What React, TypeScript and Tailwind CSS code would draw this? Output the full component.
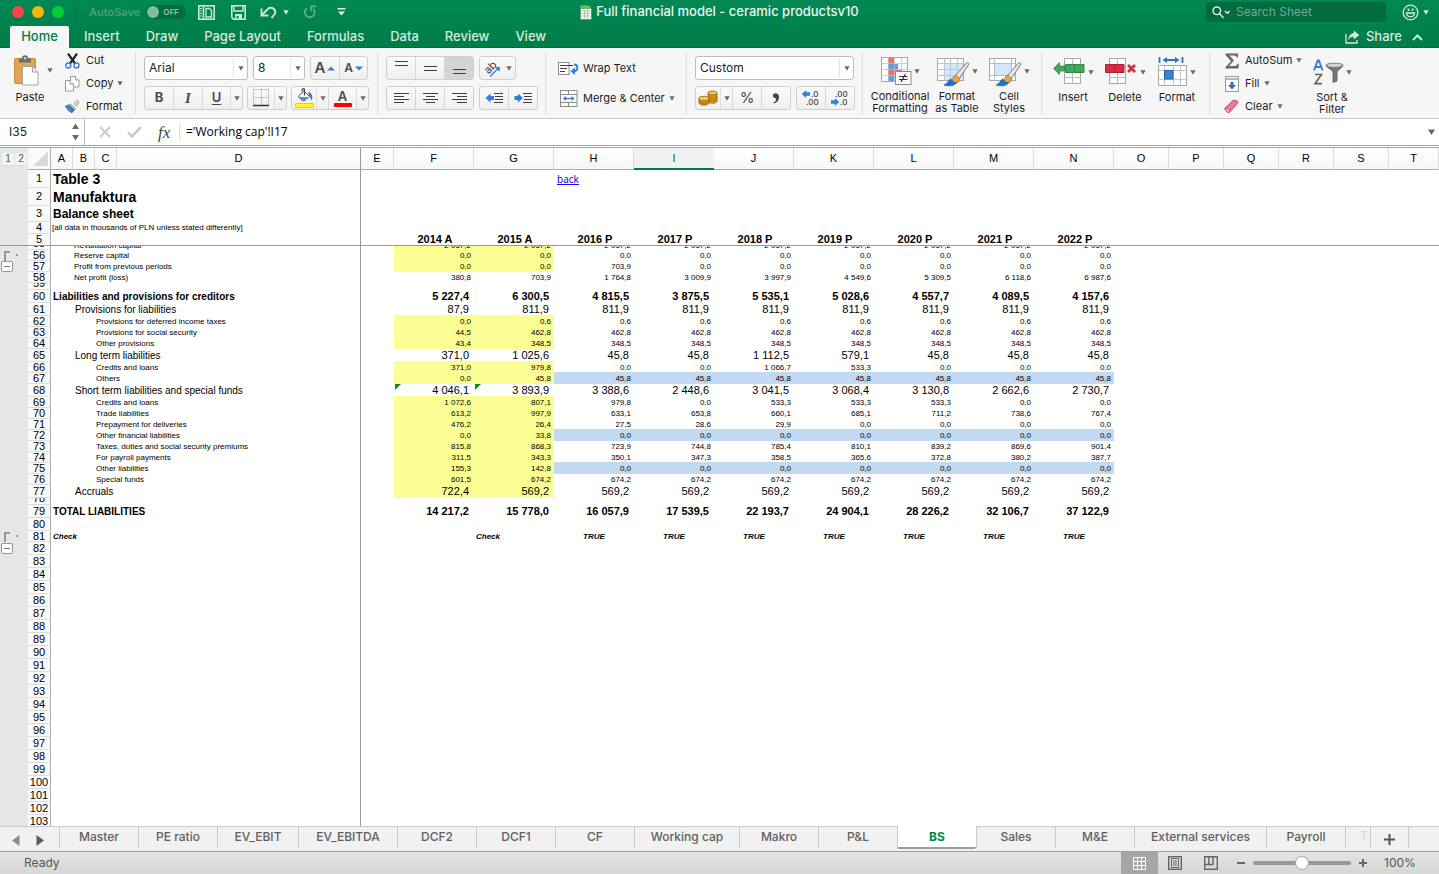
import React from 'react';
import type { ReactNode } from 'react';

/* ---------- small shared pieces ---------- */

const Caret = ({ className = 'text-[#6b6b6b]' }: { className?: string }) => (
  <svg width="6" height="5" viewBox="0 0 6 5" className={`shrink-0 ${className}`} aria-hidden="true">
    <path d="M0.300 0.300h5.400L3 4.800z" fill="currentColor" />
  </svg>
);

const DividedCaret = () => (
  <span className="flex h-full w-3 shrink-0 items-center justify-center border-l border-[#dedede]">
    <Caret />
  </span>
);

const Separator = () => <div className="w-px shrink-0 self-stretch bg-[#dedede]" />;

const segment =
  'flex h-full items-center justify-center border-l border-[#d6d6d6] first:border-l-0 text-[#4a4a4a]';
const cluster =
  'flex h-6 overflow-hidden rounded-[3px] border border-[#cfcfcf] bg-linear-to-b from-[#fafafa] to-[#efefef]';

/* ---------- title bar icons ---------- */

const PanelIcon = () => (
  <svg width="17" height="15" viewBox="0 0 17 15" fill="none" stroke="#cfe6da" strokeWidth="1.600">
    <rect x="0.800" y="0.800" width="15.400" height="13.400" />
    <path d="M5.500 1v13" />
    <path d="M2 3.500h2M2 6h2M2 8.500h2M2 11h2" strokeWidth="1" />
    <path d="M8 3.500h3.500l2 2v6.500h-5.500z" strokeWidth="1.300" />
  </svg>
);

const SaveIcon = () => (
  <svg width="15" height="15" viewBox="0 0 15 15" fill="none" stroke="#cfe6da" strokeWidth="1.600">
    <path d="M0.800 0.800h13.400v13.400H2.600L0.800 12.400z" />
    <path d="M3 1v5h9V1" strokeWidth="1.400" />
    <path d="M4 9h7v5H4z" fill="#cfe6da" stroke="none" />
    <path d="M5.500 11h2v2.500h-2z" fill="#00824c" stroke="none" />
  </svg>
);

const UndoIcon = () => (
  <svg width="17" height="14" viewBox="0 0 17 14" fill="none" stroke="#cfe6da" strokeWidth="1.900">
    <path d="M1.500 3.500v7h7" />
    <path d="M2 10L7.300 4.500c3-3.500 8.200-1 8 2.800-0.100 2-1.600 3.400-3.800 5.700" />
  </svg>
);

const RedoIcon = () => (
  <svg width="14" height="14" viewBox="0 0 14 14" fill="none" stroke="#5fae89" strokeWidth="1.800">
    <path d="M4 3A5 5 0 1 0 10.500 4" />
    <path d="M13 1.300H8.300v5" />
  </svg>
);

const WorkbookIcon = () => (
  <svg width="12" height="15" viewBox="0 0 12 15">
    <path d="M0.500 0.500h7.500l3.500 3.500v10.500h-11z" fill="#f4f7f2" stroke="#5c9c62" />
    <path d="M1 1h7l3 3H1z" fill="#62c15c" />
    <path d="M2 6h8M2 8.500h8M2 11h8M4.500 5v8.500M7.500 5v8.500" stroke="#a7b8a2" strokeWidth="0.800" />
  </svg>
);

/* ---------- ribbon icons ---------- */

const PasteIcon = () => (
  <svg width="25" height="31" viewBox="0 0 25 31">
    <rect x="0.500" y="3.500" width="21" height="25" rx="1.500" fill="#dfa553" stroke="#c98c3b" />
    <path d="M5 3.500h3a3 3.200 0 0 1 6 0h3v4H5z" fill="#6e6e6e" />
    <circle cx="11" cy="3.200" r="1.200" fill="#d9d9d9" />
    <path d="M8.500 11.500h10l5.500 5.500v13H8.500z" fill="#fff" stroke="#a3a3a3" />
    <path d="M18.500 11.500v5.500H24" fill="#eee" stroke="#a3a3a3" />
  </svg>
);

const CutIcon = () => (
  <svg width="15" height="16" viewBox="0 0 15 16" fill="none">
    <path d="M3 0.500l7 10M12 0.500l-7 10" stroke="#222" strokeWidth="2.200" />
    <circle cx="3.300" cy="12.500" r="2.500" stroke="#3a7fd0" strokeWidth="1.400" />
    <circle cx="11.500" cy="12.500" r="2.500" stroke="#3a7fd0" strokeWidth="1.400" />
  </svg>
);

const CopyIcon = () => (
  <svg width="15" height="16" viewBox="0 0 15 16" fill="#fff" stroke="#9a9a9a">
    <path d="M5.500 0.500h5l3.500 3.500v7h-8.500z" />
    <path d="M0.500 4.500h4.500l3.500 3.500v7h-8z" />
    <path d="M5 4.500v3.500h3.500M10.500 0.500v3.500h3.500" />
  </svg>
);

const PainterIcon = () => (
  <svg width="17" height="15" viewBox="0 0 17 15">
    <path d="M10 4l4-3.500 2 2L13 7z" fill="#d9d9d9" stroke="#8a8a8a" strokeWidth="0.800" />
    <path d="M6 4.500l6 5.500-1.500 1.500-6.500-5.500z" fill="#bdbdbd" stroke="#777" strokeWidth="0.800" />
    <path d="M4 6l6.500 5.500-2.500 3C5 13.500 2 11 0.500 7z" fill="#3f78b5" stroke="#2f5f94" strokeWidth="0.800" />
    <path d="M3 8.500l3.500 4" stroke="#8bb8e6" />
  </svg>
);

const BordersIcon = () => (
  <svg width="18" height="18" viewBox="0 0 18 18">
    <path d="M1.500 0.500v15M9.500 0.500v15M16.500 0.500v15M1.500 0.500h15M1.500 8.500h15" stroke="#999" strokeDasharray="1 1" fill="none" />
    <path d="M1 16.500h16" stroke="#333" strokeWidth="1.300" />
  </svg>
);

const FillIcon = () => (
  <svg width="19" height="20" viewBox="0 0 19 20">
    <path d="M3.500 8l5.500-5 5.500 5.500L9 13c-2 0-4.500-2.500-5.500-5z" fill="#fff" stroke="#555" />
    <path d="M4.500 9l9 0-4.700 3.600C7 12.500 5.500 11 4.500 9z" fill="#4a8fdc" />
    <path d="M9.500 7.500V1.200c-1.500-1.200-2.700 0-2.300 2.300" fill="none" stroke="#444" strokeWidth="1.200" />
    <path d="M13 4c4 0.500 5 4 4 8.500-1.700-1-1.500-3.500-3-5z" fill="#3a7fd0" />
    <rect x="0.500" y="15.500" width="18" height="4" rx="0.500" fill="#ff0" stroke="#d8d800" />
  </svg>
);

const alignLines: Record<string, string> = {
  top: 'M3 2.500h13M3 6.500h13',
  middle: 'M3 7.500h13M3 11.500h13',
  bottom: 'M3 10.500h13M3 14.500h13',
  left: 'M2 4.500h15M2 7.500h10M2 10.500h15M2 13.500h10',
  center: 'M2 4.500h15M5 7.500h9M2 10.500h15M5 13.500h9',
  right: 'M2 4.500h15M7 7.500h10M2 10.500h15M7 13.500h10',
};

const AlignIcon = ({ kind }: { kind: string }) => (
  <svg width="19" height="18" viewBox="0 0 19 18" stroke="#3f3f3f" fill="none">
    <path d={alignLines[kind]} />
  </svg>
);

const IndentIcon = ({ out = false }: { out?: boolean }) => (
  <svg width="19" height="18" viewBox="0 0 19 18">
    <path d="M9 4.500h9M10 7.500h8M10 10.500h8M9 13.500h9" stroke="#3f3f3f" />
    <path d={out ? 'M9 7H5.500V4.500L0.500 9l5 4.500V11H9z' : 'M0.500 7H4V4.500l5 4.500-5 4.500V11H0.500z'} fill="#2f80da" />
  </svg>
);

const OrientationIcon = () => (
  <svg width="19" height="19" viewBox="0 0 19 19" className="overflow-visible">
    <text x="1.500" y="13" fontSize="11" fontFamily="Inter" fill="#3f3f3f" transform="rotate(-45 6.500 9.500)">ab</text>
    <path d="M7 17.500l8.500-8.500" stroke="#2f80da" strokeWidth="1.300" />
    <path d="M12 8h4.800v4.800z" fill="#2f80da" />
  </svg>
);

const WrapIcon = () => (
  <svg width="21" height="15" viewBox="0 0 21 15" fill="none">
    <rect x="0.500" y="1.500" width="10.500" height="12" fill="#fff" stroke="#8c8c8c" />
    <path d="M2 4.500h13M2 7.500h7M2 10.500h5" stroke="#3f3f3f" />
    <path d="M16 3.500c4.500 0 4.500 6.500 0 7" stroke="#2f80da" strokeWidth="1.800" />
    <path d="M17 6.500v7.500L12.500 10.300z" fill="#2f80da" />
  </svg>
);

const MergeIcon = () => (
  <svg width="18" height="17" viewBox="0 0 18 17" fill="none">
    <rect x="0.500" y="0.500" width="16.500" height="16" fill="#fff" stroke="#8c8c8c" />
    <path d="M0.500 4.500h16.500M0.500 12.500h16.500M8.500 0.500v4M8.500 12.500v4" stroke="#8c8c8c" />
    <path d="M4 8.500h10" stroke="#2f80da" strokeWidth="1.300" />
    <path d="M6 6L3 8.500 6 11zM11.500 6l3 2.500-3 2.500z" fill="#2f80da" />
  </svg>
);

const CoinsIcon = () => (
  <svg width="20" height="16" viewBox="0 0 20 16" stroke="#8a5a0a" strokeWidth="0.800">
    <path d="M10 3v8c0 3 9 3 9 0V3z" fill="#dc9a1b" />
    <path d="M10 6c0 2.500 9 2.500 9 0M10 8.700c0 2.500 9 2.500 9 0" fill="none" />
    <ellipse cx="14.500" cy="3" rx="4.500" ry="2" fill="#f7cb4e" />
    <path d="M1 8.500v4c0 3.500 10 3.500 10 0v-4z" fill="#dc9a1b" />
    <path d="M1 11c0 3 10 3 10 0" fill="none" />
    <ellipse cx="6" cy="8.500" rx="5" ry="2.200" fill="#f7cb4e" />
  </svg>
);

const DecimalIcon = ({ more = false }: { more?: boolean }) => (
  <svg width="20" height="18" viewBox="0 0 20 18" fontSize="8" fontFamily="Inter" fontWeight="500">
    {more ? (
      <>
        <path d="M2 3.300h3.200V1L0.800 5l4.400 4V6.700h3.800V3.300z" fill="#2f80da" />
        <text x="10" y="8" fill="#444">.0</text>
        <text x="5" y="16" fill="#444">.00</text>
      </>
    ) : (
      <>
        <text x="5" y="8" fill="#444">.00</text>
        <path d="M1 11.300h3.800V9L9.200 13l-4.400 4v-2.300H1z" fill="#2f80da" />
        <text x="10" y="16" fill="#444">.0</text>
      </>
    )}
  </svg>
);

const Brush = () => (
  <g>
    <path d="M29.500 6c1.300-1 2.900 0.300 2 1.800L22 22l-3.500-3.500z" fill="#e6e6e6" stroke="#7a7a7a" />
    <path d="M17 19c2-2 6.500 1.500 5 5-1 2-4 3-5.500 1.500s-1.500-4.500 0.500-6.500z" fill="#e9a33f" stroke="#a8701c" strokeWidth="0.700" />
    <path d="M14 22c-3 1-2.500 4-7 6 4.500 1.300 11 1.300 12.500-2.500-2.500 0.500-4.500-1-5.500-3.500z" fill="#1f72d4" stroke="#1a5a9f" strokeWidth="0.700" />
  </g>
);

const ConditionalIcon = () => (
  <svg width="31" height="29" viewBox="0 0 31 29">
    <rect x="0.500" y="0.500" width="26" height="24" fill="#fff" stroke="#a8a8a8" />
    <path d="M7 1h6v6H7zM7 12.500h13v6H7z" fill="#f26d6d" />
    <path d="M7 7h10v5.500H7zM7 18.500h6V24H7z" fill="#5d9ee8" />
    <path d="M0.500 6.500h26M0.500 12.500h26M0.500 18.500h26M7.500 0.500v24M13.500 0.500v24M20.500 0.500v24" stroke="#bdbdbd" fill="none" strokeWidth="0.700" />
    <rect x="14.500" y="14.500" width="15.500" height="13" fill="#fff" stroke="#8a8a8a" />
    <path d="M18 19.500h8.500M18 22.500h8.500M24.500 17l-4.500 8" stroke="#333" strokeWidth="1.200" />
  </svg>
);

const TableStyleIcon = () => (
  <svg width="33" height="30" viewBox="0 0 33 30">
    <rect x="0.500" y="1.500" width="26" height="22" fill="#fff" stroke="#a8a8a8" />
    <path d="M7 7h19v16H7z" fill="#d4e6fa" />
    <path d="M0.500 6.500h26M0.500 12.500h26M0.500 18.500h26M7.500 1.500v22M13.500 1.500v22M20.500 1.500v22" stroke="#bcc6d0" fill="none" />
    <Brush />
  </svg>
);

const CellStyleIcon = () => (
  <svg width="33" height="30" viewBox="0 0 33 30">
    <rect x="0.500" y="1.500" width="26" height="22" fill="#fff" stroke="#a8a8a8" />
    <path d="M6 7h16v12H6z" fill="#d4e6fa" />
    <path d="M0.500 6.500h26M0.500 18.500h26M5.500 1.500v22M22.500 1.500v22" stroke="#bcbcbc" fill="none" />
    <Brush />
  </svg>
);

const InsertIcon = () => (
  <svg width="33" height="28" viewBox="0 0 33 28">
    <rect x="11.500" y="0.500" width="16" height="25" fill="#fff" stroke="#a8a8a8" />
    <path d="M19.500 0.500v25M11.500 19.500h16" stroke="#bcbcbc" />
    <path d="M11.500 8H6.500V4.500L0.500 10.500l6 6V13h5z" fill="#42a85a" stroke="#2e8a45" strokeWidth="0.800" />
    <path d="M12.500 6.500h18.500v8h-18.500zM21.500 6.500v8" fill="#42a85a" stroke="#2e8a45" />
  </svg>
);

const DeleteIcon = () => (
  <svg width="33" height="28" viewBox="0 0 33 28">
    <rect x="4.500" y="0.500" width="16" height="25" fill="#fff" stroke="#a8a8a8" />
    <path d="M12.500 0.500v25M4.500 19.500h16" stroke="#bcbcbc" />
    <path d="M0.500 6.500h18.500v8h-18.500zM9.500 6.500v8" fill="#d92b45" stroke="#b01c33" />
    <path d="M23 7l7 7M30 7l-7 7" stroke="#d92b45" strokeWidth="2.800" />
  </svg>
);

const FormatCellsIcon = () => (
  <svg width="30" height="30" viewBox="0 0 30 30">
    <path d="M1.500 0v6M24.500 0v6" stroke="#2f72c0" strokeWidth="1.800" />
    <path d="M7 3h12" stroke="#2f72c0" strokeWidth="2" />
    <path d="M9 0L4.500 3 9 6zM17 0l4.500 3L17 6z" fill="#2f72c0" />
    <rect x="0.500" y="8.500" width="28" height="20" fill="#fff" stroke="#a8a8a8" />
    <path d="M0.500 13.500h28M0.500 22.500h28M6.500 8.500v20M15.500 8.500v20M22.500 8.500v20" stroke="#c4c4c4" />
    <rect x="6.500" y="13.500" width="8.500" height="8.500" fill="#3a82d6" stroke="#2464ad" />
  </svg>
);

const SigmaIcon = () => (
  <svg width="14" height="16" viewBox="0 0 14 16">
    <path d="M0.500 0.500h12.500v4h-1.200c-0.200-1.300-0.800-2-2.300-2H4.500l4.500 5-5 5.500h6c1.500 0 2.200-0.800 2.500-2.200H14l-0.700 4.700H0.500v-1.200L6 8.200 0.500 2z" fill="#666" />
  </svg>
);

const FillDownIcon = () => (
  <svg width="14" height="16" viewBox="0 0 14 16">
    <rect x="0.500" y="0.500" width="13" height="15" fill="#fff" stroke="#9a9a9a" />
    <path d="M0.500 3h13" stroke="#9a9a9a" strokeWidth="1.500" />
    <path d="M5.500 6h3v3h2.500L7 13.500 3 9h2.500z" fill="#2f72c0" />
  </svg>
);

const ClearIcon = () => (
  <svg width="16" height="15" viewBox="0 0 16 15">
    <path d="M1 9.500L9.500 1.200c2-1 5 0 5.500 2L7 12.500c-1.500 2-5.500 1-6-3z" fill="#f0799a" stroke="#a83a5a" strokeWidth="0.900" />
    <path d="M1 9.500c1.500-1 5 1 5.500 3.500-1.800 1.500-5 0-5.500-3.500z" fill="#fbc2d0" stroke="#a83a5a" strokeWidth="0.900" />
  </svg>
);

const SortIcon = () => (
  <svg width="31" height="27" viewBox="0 0 31 27" fill="none">
    <path d="M1 11.500L4.700 1.500h1.200L9.600 11.500M2.500 8h5.700" stroke="#2f80da" strokeWidth="1.900" />
    <path d="M2 15.500h6.500L2 24.700h7" stroke="#666" strokeWidth="1.700" />
    <path d="M13 6.500c0-3 17-3 17 0 0 1.500-4.500 4-6 6.500v9l-4 1.500V13c-1.500-2.500-7-5-7-6.500z" fill="#777" stroke="#5c5c5c" strokeWidth="0.800" />
    <ellipse cx="21.500" cy="6.300" rx="7.500" ry="1.700" fill="#d4d4d4" />
  </svg>
);

/* ---------- title bar and ribbon tabs ---------- */

const ribbonTabs = ['Insert', 'Draw', 'Page Layout', 'Formulas', 'Data', 'Review', 'View'];

const TitleBar = () => (
  <header className="h-12 shrink-0 border-b border-[#006b3d] bg-linear-to-b from-[#008853] to-[#007c48] text-[#d5eade]">
    <div className="grid h-6 grid-cols-[1fr_auto_1fr] items-center">
      <div className="flex items-center pl-3">
        <div className="flex gap-2">
          <button aria-label="Close" className="size-3 rounded-full bg-[#fc4349]" />
          <button aria-label="Minimize" className="size-3 rounded-full bg-[#fdb40a]" />
          <button aria-label="Zoom window" className="size-3 rounded-full bg-[#00d03c]" />
        </div>
        <div className="ml-3 h-4 w-px bg-[#007644]" />
        <label className="ml-3 flex items-center gap-1.5 text-[11px] font-semibold text-[#46a179]">
          AutoSave
          <button role="switch" aria-checked="false" className="flex h-3.5 w-10 items-center gap-1 rounded-full bg-[#006c40] pl-px text-[8px] text-[#8fc6aa]">
            <span className="size-3 rounded-full bg-[#7fbe9f]" />
            OFF
          </button>
        </label>
        <button aria-label="Template gallery" className="ml-3"><PanelIcon /></button>
        <button aria-label="Save" className="ml-4"><SaveIcon /></button>
        <button aria-label="Undo" className="ml-3.5"><UndoIcon /></button>
        <Caret className="ml-1.5 text-[#d5eade]" />
        <button aria-label="Redo" className="ml-3.5"><RedoIcon /></button>
        <button aria-label="Customize toolbar" className="ml-5">
          <svg width="9" height="8" viewBox="0 0 9 8" fill="#e6f3ec"><path d="M0.500 0h8v1.500h-8zM1 3.500h7L4.500 7.500z" /></svg>
        </button>
      </div>
      <h1 className="flex items-center gap-1 text-[13px] font-medium text-[#eaf6f0]">
        <WorkbookIcon />
        Full financial model - ceramic productsv10
      </h1>
      <div className="flex items-center justify-end pr-2.5">
        <label className="flex h-5 w-[180px] items-center gap-1 rounded-[3px] bg-[#006a40] pl-1.5">
          <svg width="20" height="13" viewBox="0 0 20 13" fill="none" stroke="#e0f0e8" strokeWidth="1.400" className="shrink-0">
            <circle cx="4.800" cy="4.800" r="3.800" />
            <path d="M7.500 7.500l4 4.500M13 5l2.300 2.300L17.600 5" />
          </svg>
          <input aria-label="Search Sheet" placeholder="Search Sheet" className="w-full bg-transparent text-[12px] outline-none placeholder:text-[#6fae90]" />
        </label>
        <button aria-label="Feedback" className="ml-4 flex items-center gap-1">
          <svg width="17" height="17" viewBox="0 0 17 17" fill="none" stroke="#d5eade" strokeWidth="1.300">
            <circle cx="8.500" cy="8.500" r="7.300" />
            <path d="M4.500 9c0.500 5 7.500 5 8 0z" />
            <path d="M6.500 4.500v2.500M10.500 4.500v2.500" strokeWidth="1.600" />
          </svg>
          <Caret className="text-[#d5eade]" />
        </button>
      </div>
    </div>
    <nav className="flex h-6 items-end pl-2.5 text-[13px] font-medium">
      <button className="h-[22px] w-[59px] rounded-t-[2px] bg-[#f6f6f6] text-[#007c48]">Home</button>
      <div className="ml-[15px] flex h-[22px] items-center gap-[26px]">
        {ribbonTabs.map((t) => (
          <button key={t}>{t}</button>
        ))}
      </div>
      <button className="mr-2.5 ml-auto flex h-[22px] items-center gap-1.5">
        <svg width="15" height="14" viewBox="0 0 15 14" fill="none" stroke="#d5eade" strokeWidth="1.300">
          <path d="M1 4v9h11v-3" />
          <path d="M9 1l5 4-5 4V6.500C6 6.500 4.500 7.500 3.500 9.500 4 5.500 6 3.500 9 3.300z" fill="#d5eade" strokeWidth="0.500" />
        </svg>
        Share
      </button>
      <button aria-label="Collapse ribbon" className="mr-4 flex h-[22px] items-center">
        <svg width="11" height="7" viewBox="0 0 11 7" fill="none" stroke="#d5eade" strokeWidth="2"><path d="M1 6l4.500-4.500L10 6" /></svg>
      </button>
    </nav>
  </header>
);

/* ---------- ribbon ---------- */

const Picker = ({ label, options, className }: { label: string; options: string[]; className: string }) => (
  <div className={`relative h-6 rounded-[3px] border border-[#bdbdbd] bg-white ${className}`}>
    <select aria-label={label} className="h-full w-full appearance-none bg-transparent pl-1 text-[12px] text-[#222] outline-none">
      {options.map((o) => (
        <option key={o}>{o}</option>
      ))}
    </select>
    <span className="pointer-events-none absolute inset-y-0.5 right-0 flex w-3.5 items-center justify-center border-l border-[#e4e4e4]">
      <Caret />
    </span>
  </div>
);

const BigButton = ({ icon, lines, className }: { icon: ReactNode; lines: string[]; className: string }) => (
  <button className={`flex flex-col items-center ${className}`}>
    <span className="mb-0.5 flex h-[34px] items-center gap-0.5">
      {icon}
      <Caret />
    </span>
    {lines.map((l) => (
      <span key={l} className="leading-3 whitespace-nowrap">{l}</span>
    ))}
  </button>
);

const SmallButton = ({ icon, text, caret = false }: { icon: ReactNode; text: string; caret?: boolean }) => (
  <button className="flex h-[23px] items-center whitespace-nowrap">
    <span className="mr-1.5 flex w-[15px] justify-center">{icon}</span>
    {text}
    {caret && <Caret className="ml-1 text-[#6b6b6b]" />}
  </button>
);

const Ribbon = () => (
  <section aria-label="Home ribbon" className="flex h-[71px] shrink-0 border-b border-[#c6c6c6] bg-[#f6f6f6] pt-1 pb-1 text-[11px] text-[#1c1c1c]">
    <div className="flex w-[135px] shrink-0">
      <button className="flex w-[61px] flex-col pl-3.5">
        <span className="flex h-9 items-center gap-2">
          <PasteIcon />
          <Caret />
        </span>
        <span className="w-8 text-center leading-[18px]">Paste</span>
      </button>
      <div className="-mt-[3px] ml-1">
        <SmallButton icon={<CutIcon />} text="Cut" />
        <SmallButton icon={<CopyIcon />} text="Copy" caret />
        <SmallButton icon={<PainterIcon />} text="Format" />
      </div>
    </div>
    <Separator />

    <div className="flex w-[241px] shrink-0 flex-col gap-1.5 pt-1 pl-2">
      <div className="flex gap-[5px]">
        <Picker label="Font" options={['Arial']} className="w-[104px]" />
        <Picker label="Font size" options={['8']} className="w-[52px]" />
        <div className={cluster}>
          <button aria-label="Increase font size" className={`${segment} w-7 gap-0.5 text-[15px] font-semibold`}>
            A<svg width="8" height="5" viewBox="0 0 8 5"><path d="M0 4.500h8L4 0.500z" fill="#2f80da" /></svg>
          </button>
          <button aria-label="Decrease font size" className={`${segment} w-7 gap-0.5 text-[12px] font-semibold`}>
            A<svg width="8" height="5" viewBox="0 0 8 5"><path d="M0 0.500h8L4 4.500z" fill="#2f80da" /></svg>
          </button>
        </div>
      </div>
      <div className="flex gap-1">
        <div className={cluster}>
          <button className={`${segment} w-7 text-[13px] font-bold`}>B</button>
          <button className={`${segment} w-[29px] font-['Liberation_Serif',serif] text-[15px] font-bold italic`}>I</button>
          <button aria-label="Underline" className={`${segment} w-10`}>
            <span className="flex-1 text-[13px] font-semibold underline underline-offset-2">U</span>
            <DividedCaret />
          </button>
        </div>
        <button aria-label="Borders" className={`${cluster} w-10 items-center`}>
          <span className="flex flex-1 justify-center"><BordersIcon /></span>
          <DividedCaret />
        </button>
        <div className={cluster}>
          <button aria-label="Fill color" className={`${segment} w-9`}>
            <span className="flex flex-1 justify-center"><FillIcon /></span>
            <DividedCaret />
          </button>
          <button aria-label="Font color" className={`${segment} w-10`}>
            <span className="flex flex-1 flex-col items-center text-[13px] leading-[14px] font-semibold">
              A<span className="h-1 w-[18px] rounded-[1px] bg-[#f00]" />
            </span>
            <DividedCaret />
          </button>
        </div>
      </div>
    </div>
    <Separator />

    <div className="flex w-[167px] shrink-0 flex-col gap-1.5 pt-1 pl-2">
      <div className="flex gap-[5px]">
        <div className={cluster}>
          <button aria-label="Top align" className={`${segment} w-7`}><AlignIcon kind="top" /></button>
          <button aria-label="Middle align" className={`${segment} w-[29px]`}><AlignIcon kind="middle" /></button>
          <button aria-label="Bottom align" className={`${segment} w-[29px] bg-[#d4d4d4]`}><AlignIcon kind="bottom" /></button>
        </div>
        <button aria-label="Orientation" className={`${cluster} w-[37px] items-center justify-center gap-1`}>
          <OrientationIcon />
          <Caret />
        </button>
      </div>
      <div className="flex gap-[5px]">
        <div className={cluster}>
          <button aria-label="Align left" className={`${segment} w-7`}><AlignIcon kind="left" /></button>
          <button aria-label="Center" className={`${segment} w-[29px]`}><AlignIcon kind="center" /></button>
          <button aria-label="Align right" className={`${segment} w-[29px]`}><AlignIcon kind="right" /></button>
        </div>
        <div className={cluster}>
          <button aria-label="Decrease indent" className={`${segment} w-7`}><IndentIcon out /></button>
          <button aria-label="Increase indent" className={`${segment} w-[29px]`}><IndentIcon /></button>
        </div>
      </div>
    </div>
    <Separator />

    <div className="flex w-[140px] shrink-0 flex-col gap-1.5 pt-1 pl-3">
      <button className="flex h-6 items-center gap-1"><WrapIcon />Wrap Text</button>
      <button className="flex h-6 items-center gap-1 whitespace-nowrap">
        <span className="flex w-[21px] justify-center"><MergeIcon /></span>
        Merge &amp; Center
        <Caret />
      </button>
    </div>
    <Separator />

    <div className="flex w-[175px] shrink-0 flex-col gap-1.5 pt-1 pl-2">
      <Picker label="Number format" options={['Custom']} className="w-[159px]" />
      <div className="flex gap-[5px]">
        <div className={cluster}>
          <button aria-label="Accounting format" className={`${segment} w-9`}>
            <span className="flex flex-1 justify-center"><CoinsIcon /></span>
            <DividedCaret />
          </button>
          <button className={`${segment} w-[29px] text-[15px]`}>%</button>
          <button aria-label="Comma style" className={`${segment} w-[29px]`}>
            <svg width="8" height="12" viewBox="0 0 8 12"><path d="M1 3.500C1 0.500 7 0 7 5c0 3.500-2 5.500-5 6.500L1.500 10.500C3.500 9.500 4.500 8 4 6.200 2.500 6.500 1 5.500 1 3.500z" fill="#444" /></svg>
          </button>
        </div>
        <div className={cluster}>
          <button aria-label="Increase decimal" className={`${segment} w-7`}><DecimalIcon more /></button>
          <button aria-label="Decrease decimal" className={`${segment} w-[29px]`}><DecimalIcon /></button>
        </div>
      </div>
    </div>
    <Separator />

    <div className="flex w-[178px] shrink-0 pt-[3px] pl-1">
      <BigButton icon={<ConditionalIcon />} lines={['Conditional', 'Formatting']} className="w-[66px]" />
      <BigButton icon={<TableStyleIcon />} lines={['Format', 'as Table']} className="w-12" />
      <BigButton icon={<CellStyleIcon />} lines={['Cell', 'Styles']} className="w-[56px]" />
    </div>
    <Separator />

    <div className="flex w-[167px] shrink-0 pt-[3px] pl-[5px]">
      <BigButton icon={<InsertIcon />} lines={['Insert']} className="w-[52px]" />
      <BigButton icon={<DeleteIcon />} lines={['Delete']} className="w-[52px]" />
      <BigButton icon={<FormatCellsIcon />} lines={['Format']} className="w-[52px]" />
    </div>
    <Separator />

    <div className="flex shrink-0 pl-3.5">
      <div className="-mt-[3px] w-[84px]">
        <SmallButton icon={<SigmaIcon />} text="AutoSum" caret />
        <SmallButton icon={<FillDownIcon />} text="Fill" caret />
        <SmallButton icon={<ClearIcon />} text="Clear" caret />
      </div>
      <div className="pt-[3px]">
        <BigButton icon={<SortIcon />} lines={['Sort &', 'Filter']} className="w-[48px]" />
      </div>
    </div>
  </section>
);

/* ---------- formula bar ---------- */

const FormulaBar = () => (
  <section aria-label="Formula bar" className="flex h-[29px] shrink-0 items-center border-b-3 border-double border-[#a6a6a6] bg-white text-[12px]">
    <input aria-label="Name box" defaultValue="I35" className="w-[72px] pl-[9px] text-[#222] outline-none" />
    <svg width="7" height="18" viewBox="0 0 7 18" fill="#6b6b6b"><path d="M0 6h7L3.500 0.500zM0 12h7l-3.500 5.500z" /></svg>
    <div className="ml-[5px] h-full w-px bg-[#c0c0c0]" />
    <svg className="ml-3.5" width="12" height="12" viewBox="0 0 12 12" stroke="#cbcbcb" strokeWidth="2.200"><path d="M1 1l10 10M11 1L1 11" /></svg>
    <svg className="ml-4" width="15" height="12" viewBox="0 0 15 12" fill="none" stroke="#cbcbcb" strokeWidth="2.600"><path d="M1 6.500l4 4L14 1" /></svg>
    <span className="ml-4 w-[15px] font-['Liberation_Serif',serif] text-[17px] leading-none text-[#444] italic">fx</span>
    <div className="ml-1.5 h-3.5 w-px bg-[#dcdcdc]" />
    <input aria-label="Formula" defaultValue="='Working cap'!I17" className="ml-1.5 flex-1 font-['Open_Sans',sans-serif] text-black outline-none" />
    <button aria-label="Expand formula bar" className="mr-1">
      <svg width="7" height="6" viewBox="0 0 7 6"><path d="M0 0.500h7L3.500 6z" fill="#666" /></svg>
    </button>
  </section>
);

/* ---------- sheet ---------- */

type Kind = 'small' | 'sub' | 'head' | 'check' | 'blank';
type Fill = 'yellow' | 'blue';

interface Row {
  n: number;
  h: string;
  kind: Kind;
  label?: string;
  cells?: string[];
  ab?: boolean; // historical columns are filled yellow
  blue?: boolean; // forecast columns are filled blue
  clipped?: boolean;
  indent?: boolean;
  flagged?: boolean;
  outline?: 'start' | 'toggle';
}

const H11 = 'h-[11px]';
const H13 = 'h-[13px]';
const H7 = 'h-[7px]';
const same = (a: string, b: string, rest: string) => [a, b, ...Array<string>(7).fill(rest)];

const rows: Row[] = [
  { n: 55, h: 'h-1', kind: 'small', label: 'Revaluation capital', cells: same('2 057,2', '2 057,2', '2 057,2'), ab: true, clipped: true },
  { n: 56, h: H11, kind: 'small', label: 'Reserve capital', cells: same('0,0', '0,0', '0,0'), ab: true, outline: 'start' },
  { n: 57, h: H11, kind: 'small', label: 'Profit from previous periods', cells: ['0,0', '0,0', '703,9', '0,0', '0,0', '0,0', '0,0', '0,0', '0,0'], ab: true, outline: 'toggle' },
  { n: 58, h: H11, kind: 'small', label: 'Net profit (loss)', cells: ['380,8', '703,9', '1 764,8', '3 009,9', '3 997,9', '4 549,6', '5 309,5', '6 118,6', '6 987,6'] },
  { n: 59, h: H7, kind: 'blank', clipped: true },
  { n: 60, h: H13, kind: 'head', label: 'Liabilities and provisions for creditors', cells: ['5 227,4', '6 300,5', '4 815,5', '3 875,5', '5 535,1', '5 028,6', '4 557,7', '4 089,5', '4 157,6'] },
  { n: 61, h: H13, kind: 'sub', label: 'Provisions for liabilities', cells: same('87,9', '811,9', '811,9') },
  { n: 62, h: H11, kind: 'small', indent: true, label: 'Provisions for deferred income taxes', cells: same('0,0', '0,6', '0,6'), ab: true },
  { n: 63, h: H11, kind: 'small', indent: true, label: 'Provisions for social security', cells: same('44,5', '462,8', '462,8'), ab: true },
  { n: 64, h: H11, kind: 'small', indent: true, label: 'Other provisions', cells: same('43,4', '348,5', '348,5'), ab: true },
  { n: 65, h: H13, kind: 'sub', label: 'Long term liabilities', cells: ['371,0', '1 025,6', '45,8', '45,8', '1 112,5', '579,1', '45,8', '45,8', '45,8'] },
  { n: 66, h: H11, kind: 'small', indent: true, label: 'Credits and loans', cells: ['371,0', '979,8', '0,0', '0,0', '1 066,7', '533,3', '0,0', '0,0', '0,0'], ab: true },
  { n: 67, h: H11, kind: 'small', indent: true, label: 'Others', cells: same('0,0', '45,8', '45,8'), ab: true, blue: true },
  { n: 68, h: H13, kind: 'sub', label: 'Short term liabilities and special funds', cells: ['4 046,1', '3 893,9', '3 388,6', '2 448,6', '3 041,5', '3 068,4', '3 130,8', '2 662,6', '2 730,7'], flagged: true },
  { n: 69, h: H11, kind: 'small', indent: true, label: 'Credits and loans', cells: ['1 072,6', '807,1', '979,8', '0,0', '533,3', '533,3', '533,3', '0,0', '0,0'], ab: true },
  { n: 70, h: H11, kind: 'small', indent: true, label: 'Trade liabilities', cells: ['613,2', '997,9', '633,1', '653,8', '660,1', '685,1', '711,2', '738,6', '767,4'], ab: true },
  { n: 71, h: H11, kind: 'small', indent: true, label: 'Prepayment for deliveries', cells: ['476,2', '26,4', '27,5', '28,6', '29,9', '0,0', '0,0', '0,0', '0,0'], ab: true },
  { n: 72, h: H11, kind: 'small', indent: true, label: 'Other financial liabilities', cells: same('0,0', '33,8', '0,0'), ab: true, blue: true },
  { n: 73, h: H11, kind: 'small', indent: true, label: 'Taxes, duties and social security premiums', cells: ['815,8', '868,3', '723,9', '744,8', '785,4', '810,1', '839,2', '869,6', '901,4'], ab: true },
  { n: 74, h: H11, kind: 'small', indent: true, label: 'For payroll payments', cells: ['311,5', '343,3', '350,1', '347,3', '358,5', '365,6', '372,8', '380,2', '387,7'], ab: true },
  { n: 75, h: H11, kind: 'small', indent: true, label: 'Other liabilities', cells: same('155,3', '142,8', '0,0'), ab: true, blue: true },
  { n: 76, h: H11, kind: 'small', indent: true, label: 'Special funds', cells: same('601,5', '674,2', '674,2'), ab: true },
  { n: 77, h: H13, kind: 'sub', label: 'Accruals', cells: same('722,4', '569,2', '569,2'), ab: true },
  { n: 78, h: H7, kind: 'blank', clipped: true },
  { n: 79, h: H13, kind: 'head', label: 'TOTAL LIABILITIES', cells: ['14 217,2', '15 778,0', '16 057,9', '17 539,5', '22 193,7', '24 904,1', '28 226,2', '32 106,7', '37 122,9'] },
  { n: 80, h: H13, kind: 'blank' },
  { n: 81, h: H11, kind: 'check', label: 'Check', cells: same('', 'Check', 'TRUE'), outline: 'start' },
  { n: 82, h: H13, kind: 'blank', outline: 'toggle' },
  ...Array.from({ length: 21 }, (_, i): Row => ({ n: 83 + i, h: H13, kind: 'blank' })),
];

const columns = ['A', 'B', 'C', 'D', 'E', 'F', 'G', 'H', 'I', 'J', 'K', 'L', 'M', 'N', 'O', 'P', 'Q', 'R', 'S', 'T'];
const columnWidths = [
  'w-7', 'w-[23px]', 'w-[22px]', 'w-[22px]', 'w-[22px]', 'w-[244px]', 'w-[33px]',
  ...Array<string>(9).fill('w-[80px]'),
  ...Array<string>(5).fill('w-[55px]'),
  '',
];
const years = ['2014 A', '2015 A', '2016 P', '2017 P', '2018 P', '2019 P', '2020 P', '2021 P', '2022 P'];

const fillClass: Record<Fill, string> = {
  yellow: 'bg-[#fbff93] shadow-[0_-1px_0_#fbff93]',
  blue: 'bg-[#c3d8f1] shadow-[0_-1px_0_#c3d8f1]',
};

const labelClass: Record<Kind, string> = {
  small: 'text-[8px]',
  sub: 'pl-6 text-[10px]',
  head: 'pl-0.5 text-[10px] font-bold',
  check: 'pl-0.5 text-[8px] font-bold italic',
  blank: '',
};

const valueClass: Record<Kind, string> = {
  small: 'pr-[3px] text-right text-[8px]',
  sub: 'pr-[5px] text-right text-[11px]',
  head: 'pr-[5px] text-right text-[11px] font-bold',
  check: 'text-center text-[8px] font-bold italic',
  blank: '',
};

const rowHeader =
  'border-r border-b border-r-[#ababab] border-b-[#dcdcdc] bg-[#fafafa] p-0 text-center text-[11px] font-normal';

const Clip = ({ on, h, right, children }: { on?: boolean; h: string; right?: boolean; children: ReactNode }) =>
  on ? <div className={`flex items-end overflow-hidden ${right ? 'justify-end' : ''} ${h}`}>{children}</div> : <>{children}</>;

const OutlineMark = ({ kind }: { kind?: 'start' | 'toggle' }) => {
  if (kind === 'start')
    return (
      <svg className="ml-1 block" width="16" height="11" viewBox="0 0 16 11" fill="none">
        <path d="M1 11V2h5" stroke="#979797" strokeWidth="2" />
        <path d="M12 4h2v2h-2z" fill="#979797" />
      </svg>
    );
  if (kind === 'toggle')
    return (
      <button aria-label="Collapse group" className="ml-px flex h-[11px] w-3 items-center justify-center rounded-[2px] border border-[#979797] bg-white">
        <span className="h-px w-1.5 bg-[#777]" />
      </button>
    );
  return null;
};

const gutter = 'bg-[#e6e6e6] p-0';

const frozen = [
  { n: 1, h: 'h-[18px]', label: 'Table 3', cls: 'text-[14px] font-bold' },
  { n: 2, h: 'h-[18px]', label: 'Manufaktura', cls: 'text-[14px] font-bold' },
  { n: 3, h: 'h-4', label: 'Balance sheet', cls: 'text-[12px] font-bold' },
  { n: 4, h: 'h-[11px]', label: '[all data in thousands of PLN unless stated differently]', cls: 'text-[8px]' },
];

const Sheet = () => (
  <main className="min-h-0 flex-1 overflow-hidden bg-white">
    <table className="w-full table-fixed border-separate border-spacing-0 font-['Liberation_Sans',Arial,sans-serif] leading-none whitespace-nowrap text-black">
      <colgroup>
        {columnWidths.map((w, i) => (
          <col key={i} className={w} />
        ))}
      </colgroup>
      <thead>
        <tr className="h-[22px]">
          <th className={gutter}>
            <div className="flex gap-px pl-0.5 text-[10px] font-normal text-[#555]">
              <button className="h-3 w-3 rounded-[1px] bg-[#f4f4f4] shadow-xs">1</button>
              <button className="h-3 w-3 rounded-[1px] bg-[#f4f4f4] shadow-xs">2</button>
            </div>
          </th>
          <th aria-label="Select all" className="border-r border-b border-r-[#ababab] border-b-[#ababab] bg-[#fafafa] p-0">
            <svg className="ml-[5px] block" width="15" height="15" viewBox="0 0 15 15"><path d="M15 0v15H0z" fill="#d9d9d9" /></svg>
          </th>
          {columns.map((c) => (
            <th
              key={c}
              scope="col"
              className={`p-0 text-[11px] font-normal ${
                c === 'I'
                  ? 'border-b-2 border-b-[#007c46] bg-[#f1f1f1] text-[#0b5c3a]'
                  : c === 'D'
                    ? 'border-r border-b border-r-[#999] border-b-[#ababab] bg-linear-to-b from-white to-[#f6f6f6]'
                    : 'border-r border-b border-r-[#dcdcdc] border-b-[#ababab] bg-linear-to-b from-white to-[#f6f6f6]'
              }`}
            >
              {c}
            </th>
          ))}
        </tr>
      </thead>
      <tbody>
        {frozen.map((r) => (
          <tr key={r.n} className={r.h}>
            <td className={gutter} />
            <th scope="row" className={rowHeader}>{r.n}</th>
            <td colSpan={4} className={`border-r border-[#999] p-0 ${r.n === 4 ? 'pl-px' : 'pl-0.5'} ${r.cls}`}>{r.label}</td>
            <td colSpan={3} className="p-0" />
            <td className="p-0 pl-[3px] font-['Noto_Sans',sans-serif] text-[10px]">
              {r.n === 1 && <a href="#back" className="text-[#2a00e8] underline">back</a>}
            </td>
            <td colSpan={12} className="p-0" />
          </tr>
        ))}
        <tr className="h-3">
          <td className={`border-b border-[#999] ${gutter}`} />
          <th scope="row" className="border-r border-b border-r-[#ababab] border-b-[#999] bg-[#fafafa] p-0 text-[11px] font-normal">5</th>
          <td colSpan={4} className="border-r border-b border-[#999] p-0" />
          <td className="border-b border-[#999] p-0" />
          {years.map((y) => (
            <td key={y} className="border-b border-[#999] p-0 pl-0.5 text-center text-[11px] font-bold">{y}</td>
          ))}
          <td colSpan={6} className="border-b border-[#999] p-0" />
        </tr>
        {rows.map((r) => (
          <tr key={r.n} className={r.h}>
            <td className={gutter}><OutlineMark kind={r.outline} /></td>
            <th scope="row" className={rowHeader}>
              {r.clipped ? (
                <div className={`flex items-end justify-center overflow-hidden ${r.n === 55 ? 'h-[3px]' : 'h-[6px]'}`}>{r.n}</div>
              ) : (
                <div className={r.h === H11 ? 'h-2.5 leading-[10px]' : ''}>{r.n}</div>
              )}
            </th>
            <td colSpan={4} className={`border-r border-[#999] p-0 ${labelClass[r.kind]} ${r.kind === 'small' ? (r.indent ? 'pl-[45px]' : 'pl-[23px]') : ''}`}>
              {r.label && <Clip on={r.clipped} h={r.h}>{r.label}</Clip>}
            </td>
            <td className="p-0" />
            {years.map((y, i) => {
              const fill: Fill | null = i < 2 ? (r.ab ? 'yellow' : null) : r.blue ? 'blue' : null;
              // the first row under the freeze line keeps its fill inside the row
              const paint = fill ? (r.n === 55 ? 'bg-[#fbff93]' : fillClass[fill]) : '';
              return (
                <td
                  key={y}
                  className={`relative p-0 ${valueClass[r.kind]} ${paint} ${r.kind === 'check' && i === 1 ? 'pl-0.5 text-left!' : ''}`}
                >
                  {r.flagged && i < 2 && (
                    <svg className="absolute top-0 left-px" width="6" height="6" viewBox="0 0 6 6"><path d="M0 0h6L0 6z" fill="#0a8a1c" /></svg>
                  )}
                  {r.cells && <Clip on={r.clipped} h={r.h} right>{r.cells[i]}</Clip>}
                </td>
              );
            })}
            <td colSpan={6} className="p-0" />
          </tr>
        ))}
      </tbody>
    </table>
  </main>
);

/* ---------- sheet tabs and status bar ---------- */

const sheetTabs: [string, string][] = [
  ['Master', 'w-[79px]'],
  ['PE ratio', 'w-[79px]'],
  ['EV_EBIT', 'w-[81px]'],
  ['EV_EBITDA', 'w-[99px]'],
  ['DCF2', 'w-[79px]'],
  ['DCF1', 'w-[79px]'],
  ['CF', 'w-[79px]'],
  ['Working cap', 'w-[105px]'],
  ['Makro', 'w-[79px]'],
  ['P&L', 'w-[79px]'],
  ['BS', 'w-[79px]'],
  ['Sales', 'w-[79px]'],
  ['M&E', 'w-[79px]'],
  ['External services', 'w-[132px]'],
  ['Payroll', 'w-[79px]'],
];

const SheetTabs = () => (
  <nav aria-label="Sheets" className="flex h-[26px] shrink-0 items-start border-b border-[#a0a0a0] bg-[#f1f1f1] text-[12px] font-medium text-[#606060]">
    <div className="flex h-full w-[59px] items-center gap-4 border-t border-[#cbcbcb] pt-0.5 pl-3">
      <button aria-label="Previous sheet"><svg className="block" width="8" height="11" viewBox="0 0 8 11"><path d="M7.500 0v11L0 5.500z" fill="#8c8c8c" /></svg></button>
      <button aria-label="Next sheet"><svg className="block" width="8" height="11" viewBox="0 0 8 11"><path d="M0.500 0v11L8 5.500z" fill="#5c5c5c" /></svg></button>
    </div>
    {sheetTabs.map(([name, w]) => (
      <button
        key={name}
        className={
          name === 'BS'
            ? `h-[23px] rounded-b-[2px] border-b-2 border-l border-b-[#9c9c9c] border-l-[#cbcbcb] bg-white font-bold text-[#008a50] ${w}`
            : `h-[22px] border-t border-l border-[#cbcbcb] pb-0.5 ${w}`
        }
      >
        {name}
      </button>
    ))}
    <span className="h-[22px] w-[25px] border-t border-l border-[#cbcbcb] pr-0.5 text-right text-[#dcdcdc]">T</span>
    <button aria-label="Add sheet" className="flex h-[22px] w-[38px] items-center justify-center border-t border-l border-[#cbcbcb] pt-1">
      <svg width="11" height="11" viewBox="0 0 11 11" stroke="#555" strokeWidth="2"><path d="M5.500 0v11M0 5.500h11" /></svg>
    </button>
    <div className="h-[22px] flex-1 border-t border-l border-[#cbcbcb]" />
  </nav>
);

const StatusBar = () => (
  <footer className="flex h-[22px] shrink-0 items-center bg-linear-to-b from-[#e4e4e4] to-[#d6d6d6] text-[12px] text-[#565656]">
    <span className="pl-6">Ready</span>
    <button aria-label="Normal view" className="ml-auto flex h-full w-[37px] items-center justify-center bg-[#a6a6a6]">
      <svg width="13" height="13" viewBox="0 0 13 13" fill="none" stroke="#fff"><path d="M0.500 0.500h12v12h-12zM4.500 0.500v12M8.500 0.500v12M0.500 4.500h12M0.500 8.500h12" /></svg>
    </button>
    <button aria-label="Page layout view" className="ml-2.5">
      <svg width="14" height="14" viewBox="0 0 14 14" fill="none" stroke="#666"><rect x="0.700" y="0.700" width="12.600" height="12.600" strokeWidth="1.400" /><path d="M3.500 2.500h7v9h-7zM5 5h4M5 7h4M5 9h4" /></svg>
    </button>
    <button aria-label="Page break view" className="ml-[22px]">
      <svg width="14" height="14" viewBox="0 0 14 14" fill="none" stroke="#666" strokeWidth="1.400"><path d="M0.700 0.700h12.600v12.600H0.700zM0.700 8.500h8.300V0.700M4.800 0.700v7.800" /></svg>
    </button>
    <button aria-label="Zoom out" className="ml-[19px] h-0.5 w-2 bg-[#666]" />
    <input
      type="range"
      aria-label="Zoom"
      min="0"
      max="100"
      defaultValue="50"
      className="ml-2 h-1 w-[98px] appearance-none rounded-full bg-[#999] [&::-webkit-slider-thumb]:size-3 [&::-webkit-slider-thumb]:appearance-none [&::-webkit-slider-thumb]:rounded-full [&::-webkit-slider-thumb]:bg-white [&::-webkit-slider-thumb]:shadow-[0_0_1px_1px_#aaaaaa]"
    />
    <button aria-label="Zoom in" className="ml-2">
      <svg width="8" height="8" viewBox="0 0 8 8" stroke="#666" strokeWidth="2"><path d="M4 0v8M0 4h8" /></svg>
    </button>
    <span className="w-[72px] pl-[17px]">100%</span>
  </footer>
);

export default function App() {
  return (
    <div className="flex h-screen flex-col overflow-hidden bg-white font-[Inter,'Liberation_Sans',sans-serif]">
      <TitleBar />
      <Ribbon />
      <FormulaBar />
      <Sheet />
      <SheetTabs />
      <StatusBar />
    </div>
  );
}
